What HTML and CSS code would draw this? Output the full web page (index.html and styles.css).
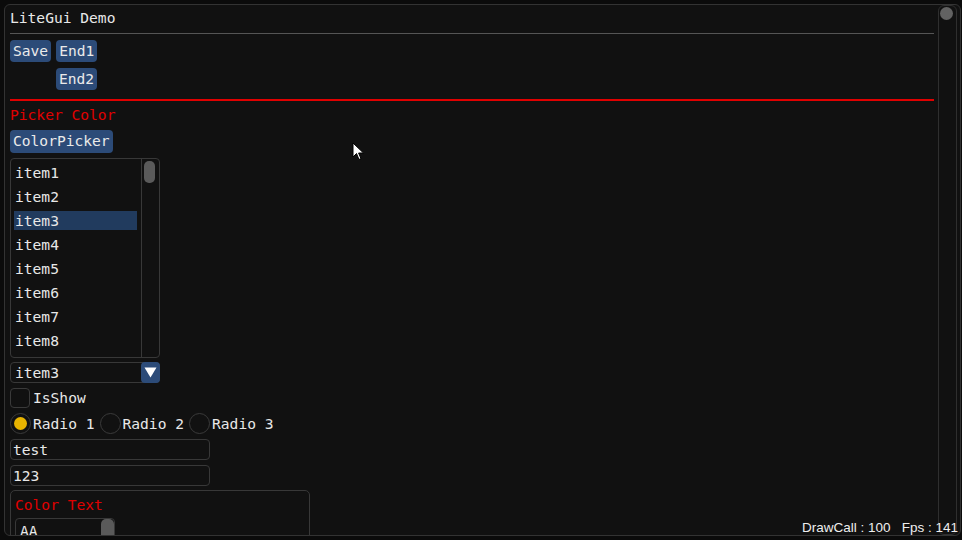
FILE: index.html
```html
<!DOCTYPE html>
<html>
<head>
<meta charset="utf-8">
<link rel="stylesheet" href="styles.css">
</head>
<body>
<div class="window">
  <div class="content">
    <div class="title">LiteGui Demo</div>
    <div class="sep"></div>
    <div class="btn-row first">
      <div class="btn">Save</div>
      <div class="btn">End1</div>
    </div>
    <div class="btn-row second">
      <div class="btn">End2</div>
    </div>
    <div class="red-line"></div>
    <div class="red-text label">Picker Color</div>
    <div class="btn-row picker"><div class="btn">ColorPicker</div></div>
    <div class="listbox">
      <div class="items">
        <div class="item">item1</div>
        <div class="item">item2</div>
        <div class="item selected">item3</div>
        <div class="item">item4</div>
        <div class="item">item5</div>
        <div class="item">item6</div>
        <div class="item">item7</div>
        <div class="item">item8</div>
      </div>
      <div class="vtrack"><div class="vthumb"></div></div>
    </div>
    <div class="combo">
      <span class="combo-text">item3</span>
      <span class="combo-btn"><svg width="13" height="11" viewBox="0 0 13 11"><path d="M0.5 0.5 H12.5 L6.5 10.5 Z" fill="#fff"/></svg></span>
    </div>
    <div class="check-row">
      <span class="checkbox"></span><span class="check-label">IsShow</span>
    </div>
    <div class="radio-row">
      <span class="radio on"><span class="dot"></span></span><span class="radio-label">Radio 1</span>
      <span class="radio"></span><span class="radio-label">Radio 2</span>
      <span class="radio"></span><span class="radio-label">Radio 3</span>
    </div>
    <div class="input">test</div>
    <div class="input">123</div>
    <div class="group">
      <div class="red-text group-title">Color Text</div>
      <div class="slider"><span class="slider-text">AA</span><span class="slider-thumb"></span></div>
    </div>
  </div>
  <div class="scrollbar"><div class="sthumb"></div></div>
</div>
<div class="stats">DrawCall : 100&nbsp;&nbsp;&nbsp;Fps : 141</div>
<svg class="cursor" width="14" height="20" viewBox="0 0 14 20"><path d="M1 1 L1 15 L4.5 11.5 L7 17.5 L9 16.6 L6.6 11 L11.5 11 Z" fill="#fff" stroke="#000" stroke-width="1"/></svg>
</body>
</html>
```

FILE: styles.css
```css
html, body {
  margin: 0;
  padding: 0;
  background: #0b0b0b;
  width: 962px;
  height: 540px;
  overflow: hidden;
}
body {
  position: relative;
  font-family: "DejaVu Sans Mono", "Liberation Mono", monospace;
  font-size: 14.6px;
  color: #e8e8e8;
}
.window {
  position: absolute;
  left: 4px;
  top: 4px;
  width: 955px;
  height: 530px;
  border: 1px solid #333;
  border-radius: 6px;
  background: #111111;
  display: flex;
  overflow: hidden;
}
.content {
  flex: 1;
  padding-left: 5px;
  padding-right: 4px;
  display: flex;
  flex-direction: column;
  align-items: flex-start;
}
.content > * { flex-shrink: 0; }
.title {
  margin-top: 3px;
  height: 20px;
  line-height: 20px;
}
.sep {
  align-self: stretch;
  margin-top: 5px;
  height: 1px;
  background: #555;
}
.btn-row {
  display: flex;
  gap: 5px;
  height: 22px;
}
.btn-row.first { margin-top: 6px; }
.btn-row.second { margin-top: 6px; padding-left: 46px; }
.btn-row.picker { margin-top: 5px; height: 23px; }
.btn {
  background: #2c4b78;
  border-radius: 4px;
  padding: 0 3px;
  line-height: 22px;
  height: 100%;
  color: #eaeaea;
}
.red-line {
  align-self: stretch;
  margin-top: 9px;
  height: 2px;
  background: #e00000;
}
.red-text { color: #e00000; }
.label {
  margin-top: 4px;
  height: 20px;
  line-height: 20px;
}
.listbox {
  margin-top: 5px;
  width: 148px;
  height: 198px;
  border: 1px solid #383838;
  border-radius: 4px;
  display: flex;
}
.items {
  flex: 1;
  padding: 4px 4px 0 3px;
  display: flex;
  flex-direction: column;
  gap: 5px;
}
.item {
  height: 19px;
  line-height: 19px;
  padding-left: 1px;
}
.item.selected { background: #213b5e; }
.vtrack {
  width: 14px;
  border-left: 1px solid #383838;
  padding: 2px 1px 0 2px;
}
.vthumb {
  width: 11px;
  height: 22px;
  background: #5a5a5a;
  border-radius: 5px;
}
.combo {
  margin-top: 4px;
  width: 148px;
  height: 19px;
  border: 1px solid #383838;
  border-radius: 4px;
  display: flex;
  align-items: center;
}
.combo-text { flex: 1; padding-left: 4px; line-height: 19px; }
.combo-btn {
  width: 19px;
  height: 21px;
  margin-right: -1px;
  background: #2c4b78;
  border-radius: 4px;
  display: flex;
  align-items: center;
  justify-content: center;
}
.check-row {
  margin-top: 4px;
  display: flex;
  align-items: center;
  height: 21px;
}
.checkbox {
  width: 18px;
  height: 18px;
  border: 1px solid #3a3a3a;
  border-radius: 4px;
}
.check-label { margin-left: 3px; }
.radio-row {
  margin-top: 5px;
  display: flex;
  align-items: center;
  height: 21px;
}
.radio {
  width: 19px;
  height: 19px;
  border: 1px solid #3a3a3a;
  border-radius: 50%;
  display: flex;
  align-items: center;
  justify-content: center;
}
.dot {
  width: 13px;
  height: 13px;
  border-radius: 50%;
  background: #e8b400;
}
.radio-label { margin-left: 2px; margin-right: 5px; }
.input {
  margin-top: 5px;
  width: 196px;
  height: 19px;
  line-height: 19px;
  border: 1px solid #383838;
  border-radius: 4px;
  padding-left: 2px;
}
.group {
  margin-top: 4px;
  width: 294px;
  height: 80px;
  border: 1px solid #383838;
  border-radius: 5px;
  padding-left: 4px;
}
.group-title {
  margin-top: 4px;
  height: 20px;
  line-height: 20px;
}
.slider {
  margin-top: 3px;
  width: 98px;
  height: 30px;
  border: 1px solid #383838;
  border-radius: 4px;
  display: flex;
  justify-content: space-between;
}
.slider-text { padding: 2px 0 0 4px; line-height: 20px; }
.slider-thumb {
  width: 13px;
  height: 30px;
  background: #5a5a5a;
  border-radius: 5px;
}
.scrollbar {
  width: 15px;
  margin: 0 3px 0 0;
  border: 1px solid #2f2f2f;
  border-radius: 6px;
  padding: 1px 1px 0 1px;
}
.sthumb {
  width: 13px;
  height: 13px;
  border-radius: 50%;
  background: #626262;
}
.stats {
  position: absolute;
  right: 4px;
  bottom: 4px;
  font-family: "Liberation Sans", Arial, sans-serif;
  font-size: 13.5px;
  color: #eeeeee;
  line-height: 16px;
}
.cursor {
  position: absolute;
  left: 352px;
  top: 142px;
}
```
